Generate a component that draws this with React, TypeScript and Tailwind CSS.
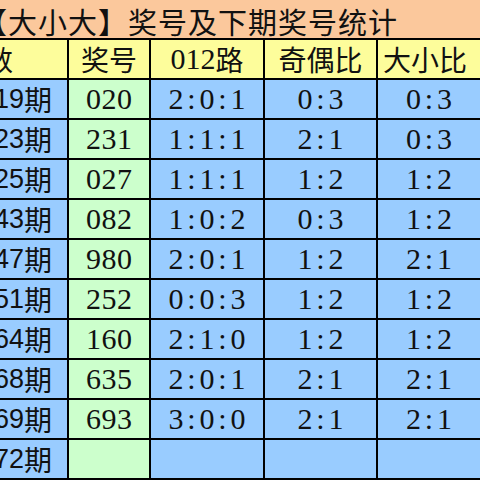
import React from 'react';

const rows = [
  { qi: '019', num: '020', road: '2:0:1', odd: '0:3', size: '0:3' },
  { qi: '023', num: '231', road: '1:1:1', odd: '2:1', size: '0:3' },
  { qi: '025', num: '027', road: '1:1:1', odd: '1:2', size: '1:2' },
  { qi: '043', num: '082', road: '1:0:2', odd: '0:3', size: '1:2' },
  { qi: '047', num: '980', road: '2:0:1', odd: '1:2', size: '2:1' },
  { qi: '051', num: '252', road: '0:0:3', odd: '1:2', size: '1:2' },
  { qi: '064', num: '160', road: '2:1:0', odd: '1:2', size: '1:2' },
  { qi: '068', num: '635', road: '2:0:1', odd: '2:1', size: '2:1' },
  { qi: '069', num: '693', road: '3:0:0', odd: '2:1', size: '2:1' },
  { qi: '072', num: '', road: '', odd: '', size: '' },
];

const cjk = "[font-family:'Noto_Sans_CJK_SC',sans-serif]";

// each character in a fixed cell, so colons take the same width as digits
const Mono: React.FC<{ text: string }> = ({ text }) => (
  <span className="flex">
    {text.split('').map((c, i) => (
      <span key={i} className="inline-block w-[15.5px] text-center">
        {c}
      </span>
    ))}
  </span>
);

const Cell: React.FC<{ bg: string; children?: React.ReactNode }> = ({ bg, children }) => (
  <div
    className={`${bg} h-[38px] flex items-center justify-center text-[30px] leading-none text-[#111] [font-family:'Liberation_Serif',serif]`}
  >
    {children}
  </div>
);

export default function App() {
  return (
    <div className="w-[480px] h-[480px] overflow-hidden bg-black">
      <div
        className={`h-[38px] bg-[#fbc89c] flex items-center overflow-hidden whitespace-nowrap pt-[4px] text-[29px] leading-none tracking-[1px] text-[#111] ${cjk}`}
      >
        <span className="-ml-[22px]">【大小大】奖号及下期奖号统计</span>
      </div>

      <div className="grid grid-cols-[67px_80px_112px_111px_1fr] gap-[2px] pt-[2px] pb-[2px]">
        {/* header */}
        <div
          className={`h-[38px] bg-[#fdfd9b] flex items-center justify-end overflow-hidden whitespace-nowrap pr-[54px] text-[28px] leading-none text-[#111] ${cjk}`}
        >
          期数
        </div>
        <div className={`h-[38px] bg-[#fdfd9b] flex items-center justify-center text-[28px] leading-none text-[#111] ${cjk}`}>
          奖号
        </div>
        <div className="h-[38px] bg-[#fdfd9b] flex items-center justify-center text-[30px] leading-none text-[#111] [font-family:'Liberation_Serif','Noto_Sans_CJK_SC',serif]">
          012<span className={`text-[28px] ${cjk}`}>路</span>
        </div>
        <div className={`h-[38px] bg-[#fdfd9b] flex items-center justify-center text-[28px] leading-none text-[#111] ${cjk}`}>
          奇偶比
        </div>
        <div className={`h-[38px] bg-[#fdfd9b] flex items-center justify-start pl-[5px] text-[28px] leading-none text-[#111] ${cjk}`}>
          大小比
        </div>

        {rows.map((r) => (
          <React.Fragment key={r.qi}>
            <div className="h-[38px] bg-[#99ccff] flex items-center justify-end overflow-hidden whitespace-nowrap pr-[15px] text-[27px] leading-none text-[#111] [font-family:'Liberation_Sans','Noto_Sans_CJK_SC',sans-serif]">
              {r.qi}
              <span className={`text-[28px] ${cjk}`}>期</span>
            </div>
            <Cell bg="bg-[#ccffcc]">
              <Mono text={r.num} />
            </Cell>
            <Cell bg="bg-[#99ccff]">
              <Mono text={r.road} />
            </Cell>
            <Cell bg="bg-[#99ccff]">
              <Mono text={r.odd} />
            </Cell>
            <Cell bg="bg-[#99ccff]">
              <Mono text={r.size} />
            </Cell>
          </React.Fragment>
        ))}
      </div>
    </div>
  );
}
